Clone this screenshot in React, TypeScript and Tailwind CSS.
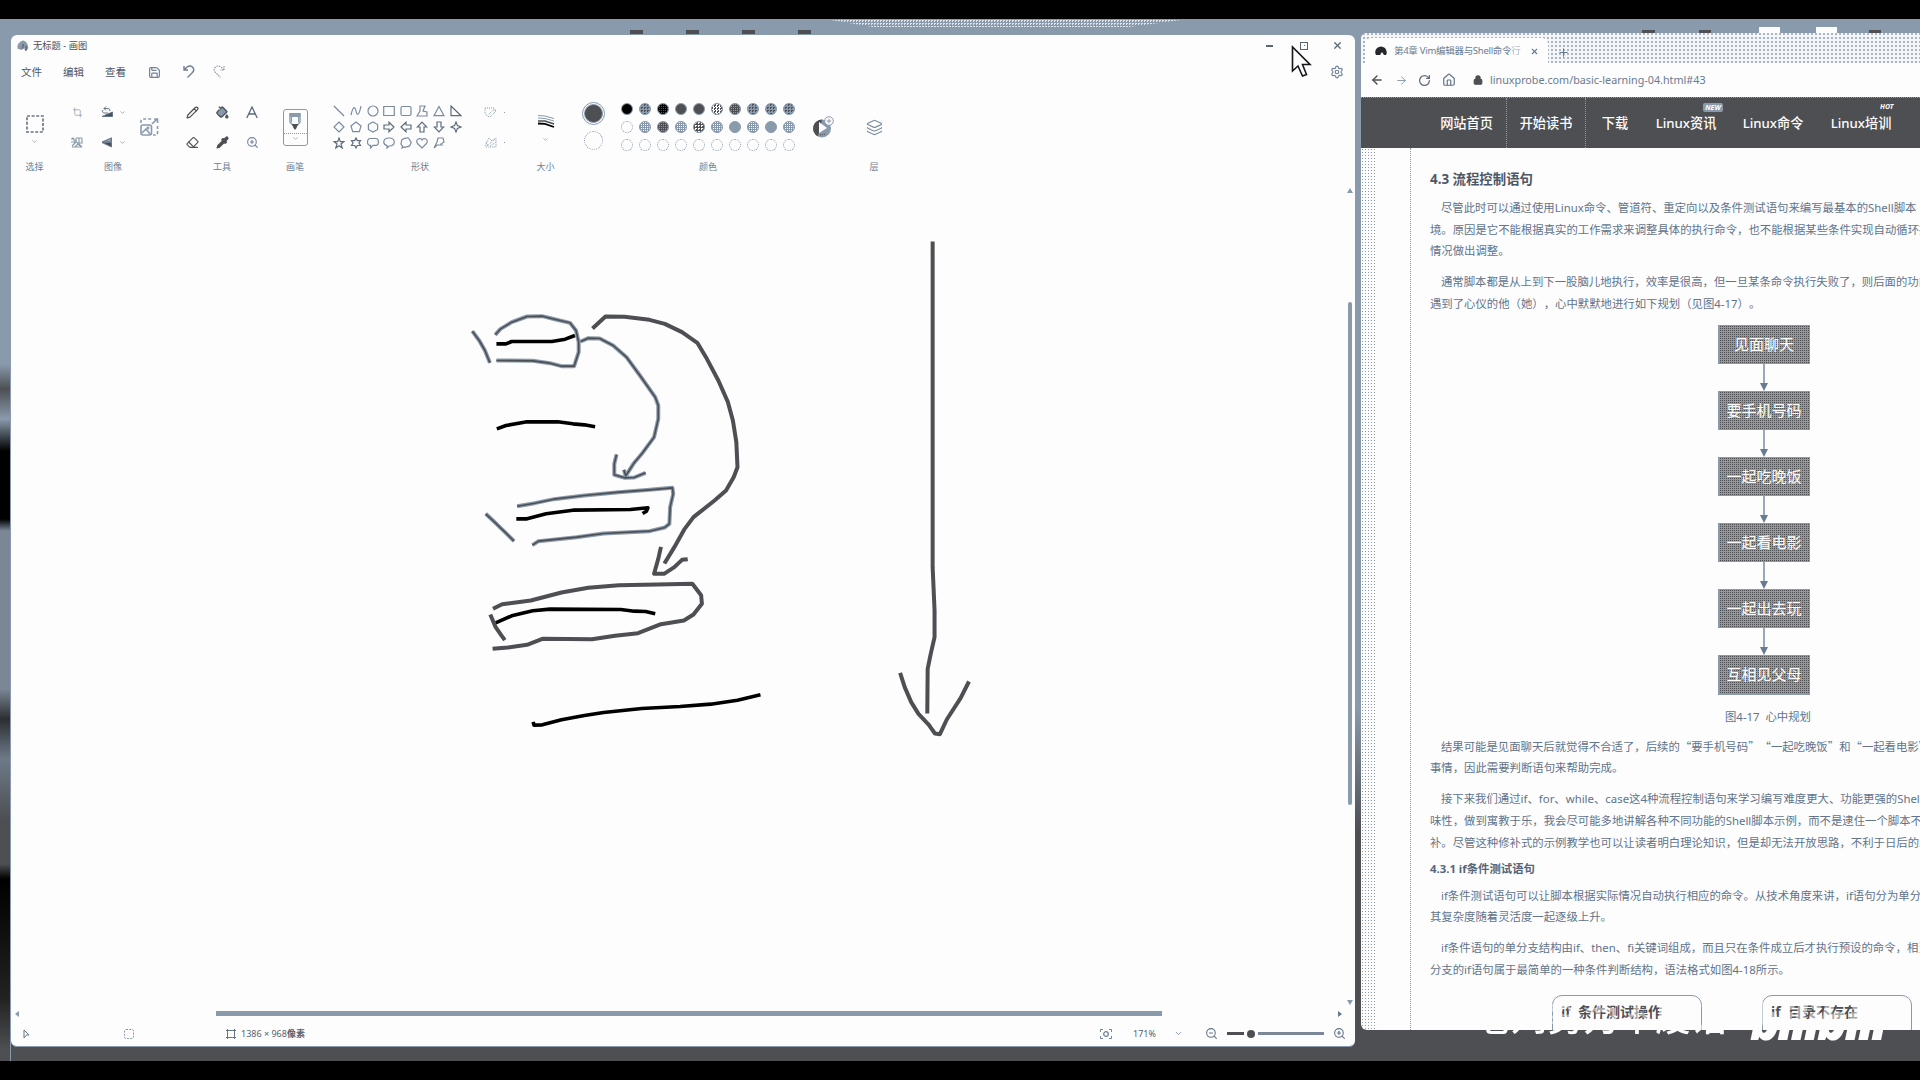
import React from "react";
import {
  Save, Undo2, Redo2, Settings, Crop, Pencil, PaintBucket, Eraser, Pipette, ZoomIn, ZoomOut,
  Layers, ArrowLeft, ArrowRight, RotateCw, House, Lock, X, Plus, ChevronDown,
} from "lucide-react";

const SHAPES = [
  "M1 1L11 11", "M1 10C3 1 5 1 6 6S9 11 11 1", "M6 1A5 5 0 1 1 6 11A5 5 0 1 1 6 1Z", "M.7 1.5H11.3V10.5H.7Z",
  "M2.5 1.5H9.5Q11 1.5 11 3V9Q11 10.5 9.5 10.5H2.5Q1 10.5 1 9V3Q1 1.5 2.5 1.5Z",
  "M4 1H9L7 6L11 7V11H1L4 6Z", "M6 1.5L11 10.7H1Z", "M1 1L11 10.7H1Z",
  "M6 1L11 6L6 11L1 6Z", "M6 1L11 5L9.3 10.7H2.7L1 5Z", "M6 1L10.6 3.5V8.5L6 11L1.4 8.5V3.5Z",
  "M1 4H6V1.2L11 6L6 10.8V8H1Z", "M11 4H6V1.2L1 6L6 10.8V8H11Z", "M4 11V6H1.2L6 1L10.8 6H8V11Z",
  "M4 1V6H1.2L6 11L10.8 6H8V1Z", "M6 1L7.4 4.6L11 6L7.4 7.4L6 11L4.6 7.4L1 6L4.6 4.6Z",
  "M6 1L7.3 4.6H11L8 7L9.2 11L6 8.7L2.8 11L4 7L1 4.6H4.7Z",
  "M6 1L7.3 3.6H10.5L9 6L10.5 8.5H7.3L6 11L4.7 8.5H1.5L3 6L1.5 3.6H4.7Z",
  "M2.5 1.5H9.5Q11.5 2 11.5 5Q11.5 8 9.5 8.3H6L3.5 11V8.3H2.5Q.5 8 .5 5Q.5 2 2.5 1.5Z",
  "M6 1C13 1 13 9 6 9L4 11V8.6C-1 7 0 1 6 1Z",
  "M6 1.2Q9 0 9.5 3Q12 5 10.5 7Q10 10 7 9.6Q5 11 4 10L2 11L2.6 9Q0 7 1.5 5Q1 2 6 1.2Z",
  "M6 11L1.5 6.5C-1 3 4 -.5 6 3C8 -.5 13 3 10.5 6.5Z",
  "M5 1H10L11 5L8 7L9 8L4 8L1 11L4 5Z",
];

const SOLID = "bg-[#8a9aad]";
const DOT_DARK = "bg-[#8a9aad] bg-[conic-gradient(#4d4f53_25%,transparent_0)] bg-[size:3px_3px]";
const DOT_LIGHT = "bg-[#8a9aad] bg-[conic-gradient(#fdfdfd_25%,transparent_0)] bg-[size:2px_2px]";
const GREY = "bg-[#4d4f53]";
const PALETTE = [
  "bg-black", DOT_DARK, "bg-black bg-[conic-gradient(#4d4f53_25%,transparent_0)] bg-[size:2px_2px]", GREY, GREY,
  "bg-[#4d4f53] bg-[conic-gradient(#fdfdfd_25%,transparent_0_50%,#fdfdfd_0_75%,transparent_0)] bg-[size:3px_3px]",
  "bg-[#4d4f53] bg-[conic-gradient(#8a9aad_25%,transparent_0)] bg-[size:2px_2px]", DOT_DARK, DOT_DARK, DOT_DARK,
  "bg-[#fdfdfd] border-dotted", DOT_LIGHT, "bg-[#4d4f53] bg-[conic-gradient(#8a9aad_25%,transparent_0)] bg-[size:2px_2px]", DOT_LIGHT,
  "bg-[#4d4f53] bg-[conic-gradient(#fdfdfd_25%,transparent_0)] bg-[size:3px_3px]",
  DOT_LIGHT, SOLID, DOT_LIGHT, SOLID, DOT_LIGHT,
];

const Chev = ({ s = 7 }: { s?: number }) => <ChevronDown size={s} strokeWidth={2.5} className="shrink-0 text-[#8a9aad]" />;

function Group({ label, className, children }: { label: string; className: string; children: React.ReactNode }) {
  return (
    <div className={`flex shrink-0 flex-col pt-[7px] ${className}`}>
      <div className="flex h-[60px] items-center justify-center">{children}</div>
      <div className="mt-[4px] h-3 text-center text-[9px] leading-3 text-[#6d7e94]">{label}</div>
    </div>
  );
}

const Cell = ({ children }: { children: React.ReactNode }) => (
  <div className="flex h-[30px] items-center justify-center">{children}</div>
);

function Ribbon() {
  return (
    <div className="flex h-[88px] shrink-0">
      <Group label="选择" className="w-[47px]">
        <div className="flex flex-col items-center pt-[6px]">
          <svg width="18" height="18" viewBox="0 0 18 18" fill="none" stroke="#697687" strokeWidth="1.7" strokeDasharray="3 1.6"><path d="M1 1H17V17H1Z" /></svg>
          <div className="h-[5px]" />
          <Chev />
        </div>
      </Group>
      <Group label="图像" className="w-[110px]">
        <div className="flex w-full items-center pl-[11px]">
          <div className="w-4">
            <Cell><Crop size={11} strokeWidth={1.6} strokeDasharray="2 1.5" className="text-[#8a9aad]" /></Cell>
            <Cell>
              <svg width="12" height="11" viewBox="0 0 12 11" fill="none" stroke="#8a9aad" strokeWidth="1.1"><path d="M0 2L3 1M0 5H4M1 9L5 5M4 10L7 7M1 1L11 10M5 1V4M8 1V9M5 1H11M11 1V6H6M1 10H11" /></svg>
            </Cell>
          </div>
          <div className="ml-[14px] w-4">
            <Cell>
              <svg width="13" height="12" viewBox="0 0 13 12" fill="none" stroke="#65758a"><path d="M5 .5L3 2.5L5 4.5M3 2.5H7Q9 2.5 9 5M2 4Q0 7 4 7H7" /><path d="M1 10.5H11.5V6Z" fill="#4d4f53" /></svg>
            </Cell>
            <Cell>
              <svg width="12" height="11" viewBox="0 0 12 11" stroke="#697687"><path d="M10.5 .8V5L1 5Z" fill="#8a9aad" /><path d="M1 5.5H10.5V10Z" fill="#4d4f53" /></svg>
            </Cell>
          </div>
          <div className="ml-[2px] w-[10px]"><Cell><Chev /></Cell><Cell><Chev /></Cell></div>
          <svg className="ml-[13px]" width="19" height="18" viewBox="0 0 19 18" fill="none" stroke="#8a9aad" strokeWidth="1.6">
            <path d="M1 5V3Q1 1 3 1H13" strokeDasharray="3 2" /><path d="M17.5 8V15Q17.5 17 15 17H13" strokeDasharray="3 2" />
            <path d="M12 6L17 1M14 1H17.5V5" /><rect x="1" y="7" width="10.5" height="10" rx="2" /><path d="M2 15L6 11L10 16" /><circle cx="8" cy="10" r=".6" />
          </svg>
        </div>
      </Group>
      <Group label="工具" className="w-[108px]">
        <div className="grid grid-cols-[30px_30px_30px] text-[#4d4f53]">
          <Cell><Pencil size={13} strokeWidth={2.2} /></Cell>
          <Cell><PaintBucket size={13} strokeWidth={2.4} fill="#8a9aad" /></Cell>
          <Cell><svg width="12" height="13" viewBox="0 0 12 13" fill="none" stroke="#5b6878" strokeWidth="1.3"><path d="M.8 12L6 1L11.2 12M2.8 8H9.2" /></svg></Cell>
          <Cell><Eraser size={13} strokeWidth={2} /></Cell>
          <Cell><Pipette size={13} strokeWidth={2.3} fill="#4d4f53" /></Cell>
          <Cell><ZoomIn size={13} strokeWidth={2} className="text-[#72839a]" /></Cell>
        </div>
      </Group>
      <Group label="画笔" className="w-[38px]">
        <div className="flex h-[37px] w-[25px] flex-col items-center rounded-[3px] border border-[#8a9aad]">
          <svg className="mt-[3px]" width="12" height="18" viewBox="0 0 12 18"><path d="M1 .5H11V9L8.5 12H3.5L1 9Z" fill="#fdfdfd" stroke="#8a9aad" strokeWidth="1.4" /><path d="M1 .5H11V3.5H1ZM2.5 4V9M9.5 4V9" fill="#8a9aad" stroke="#8a9aad" /><path d="M3 11H9L7.5 15L6 17L4.5 15Z" fill="#4d4f53" /></svg>
          <div className="mb-[1px] mt-[2px] w-full border-t border-dotted border-[#8a9aad]" />
          <Chev />
        </div>
      </Group>
      <Group label="形状" className="w-[212px]">
        <div className="flex w-full items-center pl-[17px]">
          <div className="grid w-[133px] grid-cols-8">
            {SHAPES.map((d, i) => (
              <div key={i} className="flex h-4 items-center justify-center">
                <svg width="12" height="12" viewBox="0 0 12 12" fill="none" stroke={i === 7 || (i > 10 && i < 18) ? "#5f6c7c" : "#7b8b9f"} strokeWidth="1.2"><path d={d} /></svg>
              </div>
            ))}
          </div>
          <div className="ml-[20px] w-[13px]">
            <Cell><svg width="13" height="11" viewBox="0 0 13 11" fill="none" stroke="#8a9aad" strokeDasharray="1 1"><path d="M1 1H10L12 4L6 10L3 9L1 6ZM12 4L9 3L4 8" /></svg></Cell>
            <Cell><svg width="13" height="11" viewBox="0 0 13 11" fill="none" stroke="#8a9aad" strokeDasharray="1 1"><path d="M1 9L5 1L8 4L12 1V10H1M3 9L11 2M6 9L12 5M2 5L4 9" /></svg></Cell>
          </div>
          <div className="ml-[4px] w-[6px]">
            <Cell><div className="h-px w-px bg-[#8a9aad]" /></Cell>
            <Cell><div className="h-px w-px bg-[#8a9aad]" /></Cell>
          </div>
        </div>
      </Group>
      <Group label="大小" className="w-[39px]">
        <div className="flex flex-col items-center pt-[3px]">
          <svg width="18" height="14" viewBox="0 0 18 14" fill="none"><path d="M1 1.5L8 2L17 4.5M1 4L8 4.5L17 7" stroke="#8a9aad" /><path d="M1 7L8 7L17 10" stroke="#4d4f53" strokeWidth="1.5" /><path d="M1 9.5L8 9.8L17 13" stroke="#000" strokeWidth="1.8" /></svg>
          <div className="h-[8px]" />
          <Chev />
        </div>
      </Group>
      <Group label="颜色" className="w-[286px]">
        <div className="flex w-full items-center pl-[17px]">
          <div className="flex w-[23px] flex-col items-center gap-[6px] pb-[2px]">
            <div className="flex h-[23px] w-[23px] items-center justify-center rounded-full border border-[#8a9aad]">
              <div className="h-[19px] w-[19px] rounded-full border border-[#8a9aad] bg-[#4d4f53]" />
            </div>
            <div className="h-[19px] w-[19px] rounded-full border border-dotted border-[#8a9aad]" />
          </div>
          <div className="ml-[13px] grid grid-cols-[repeat(10,18px)]">
            {PALETTE.map((c, i) => (
              <div key={i} className="flex h-[18px] items-center justify-center">
                <div className={`h-3 w-3 rounded-full border border-[#8a9aad] ${c}`} />
              </div>
            ))}
            {Array.from({ length: 10 }, (_, i) => (
              <div key={i} className="flex h-[18px] items-center justify-center">
                <div className="h-3 w-3 rounded-full border border-dotted border-[#8a9aad]" />
              </div>
            ))}
          </div>
          <svg className="ml-[14px]" width="22" height="22" viewBox="0 0 22 22"><circle cx="10" cy="12.5" r="9" fill="#8a9aad" /><path d="M10 3.5A9 9 0 0 0 6 20.5L8 12Z" fill="#4d4f53" /><path d="M7 6L15 12L7 17Z" fill="#fdfdfd" /><path d="M8 19L14 18" stroke="#4d4f53" strokeDasharray="1 1" /><circle cx="17" cy="5" r="4.3" fill="#fdfdfd" stroke="#8a9aad" /><path d="M17 2.7V7.3M14.7 5H19.3" stroke="#8a9aad" /></svg>
        </div>
      </Group>
      <Group label="层" className="w-[46px]">
        <Layers size={17} strokeWidth={1.6} className="text-[#7d8ea3]" />
      </Group>
    </div>
  );
}

const BLUE = [
  "M57 122L75 150L90 180L103 217",
  "M117 133L130 116L160 95L200 78L240 77L275 87L312 97L328 120L335 155L335 185L323 227L290 227L260 218L215 211L120 210",
  "M340 153L360 143L390 144L425 165L460 200L495 255L535 320L543 345L543 385L532 440L500 490L478 520L458 556L453 538",
  "M434 492L428 520L428 553L455 562L480 561L510 547",
  "M92 670L120 700L145 728L166 752",
  "M174 647L220 638L270 626L350 615L440 605L520 598L580 592L582 610L574 650L572 700L560 711L520 722L400 729L330 740L230 752L214 764",
];
const BLACK = [
  "M120 160L145 160L160 153L265 153L300 146L325 135",
  "M121 415L145 405L200 394L280 394L320 400L350 403L378 409",
  "M172 685L200 685L250 670L320 659L470 657L516 652L512 662L502 669",
  "M118 997L160 976L215 961L260 956L445 957L480 962L510 963L535 970",
  "M216 1294L218 1304L240 1303L290 1288L350 1275L400 1266L500 1254L600 1248L680 1241L750 1229L810 1213",
];
const DARK = [
  "M371 114L405 78L455 79L520 88L560 100L605 125L645 157L670 205L700 270L725 335L738 390L747 455L750 530L740 560L720 600L690 630L635 680L612 715L585 770L559 819",
  "M550 769L543 805L532 850L558 850L585 830L605 808L620 806",
  "M111 955L135 941L210 930L290 906L360 892L440 884L540 882L632 880L655 914L657 940L635 972L610 990L550 1001L490 1028L430 1036L370 1046L240 1045L200 1063L150 1071L110 1075",
  "M104 972L118 1010L132 1033L142 1049",
  "M1260 -147L1260 830L1265 960L1265 1040L1255 1090L1247 1135L1246 1269",
  "M1175 1147L1187 1190L1204 1235L1223 1270L1250 1303L1266 1329L1279 1331L1297 1287L1333 1223L1355 1173",
];

function Strokes({ paths, color, width }: { paths: string[]; color: string; width: number }) {
  return (
    <g stroke={color} strokeWidth={width}>
      {paths.map((d) => <path key={d} d={d} vectorEffect="non-scaling-stroke" />)}
    </g>
  );
}

function Canvas() {
  return (
    <svg className="h-[827px] w-[1330px] shrink-0" viewBox="11 178 1330 827" fill="none">
      <g transform="translate(450.5 290.5) scale(.38265 .33333)" strokeLinejoin="round">
        <Strokes paths={BLUE} color="#8a9aad" width={4} />
        <Strokes paths={BLUE} color="#4d4f53" width={1.6} />
        <Strokes paths={BLACK} color="#000" width={3.6} />
        <Strokes paths={DARK} color="#4d4f53" width={4} />
      </g>
    </svg>
  );
}

function PaintWindow() {
  return (
    <div className="mt-[16px] flex h-[1012px] w-[1344px] shrink-0 flex-col overflow-hidden rounded-[6px] border-b border-[#8a9aad] bg-[#fdfdfd]">
      <div className="flex h-[21px] shrink-0 items-center pl-[6px]">
        <svg width="12" height="12" viewBox="0 0 12 12"><path d="M3 2Q6 -1 9 2Q12 5 11 9L8 11L7 7L5 10L1 9Q-1 5 3 2Z" fill="#8a9aad" /><path d="M6 4V9M9 6V11" stroke="#4d4f53" /></svg>
        <span className="ml-[4px] text-[9.3px] leading-none text-[#4d4f53]">无标题 - 画图</span>
        <div className="ml-auto flex items-center pr-[12px] text-[#5b6675]">
          <div className="h-[2px] w-[7px] bg-current" />
          <div className="ml-[27px] flex h-[8px] w-[8px] items-center justify-center border border-current"><div className="h-px w-px bg-current" /></div>
          <X size={11} strokeWidth={2.6} className="ml-[24px]" />
        </div>
      </div>
      <div className="flex h-[34px] shrink-0 items-center pl-[10px] text-[10.5px] text-[#4d5866]">
        <span className="w-[42px]">文件</span><span className="w-[42px]">编辑</span><span className="w-[43px]">查看</span>
        <Save size={13} strokeWidth={2.2} className="-mt-[2px] text-[#72839a]" />
        <svg className="-mt-[3px] ml-[22px]" width="12" height="13" viewBox="0 0 12 13" fill="none" stroke="#6d7e94" strokeWidth="1.4"><path d="M1 1V5H5M1 5L4 2Q7 0 9.5 2Q12 5 9.5 7.5L4.5 12.5" /></svg>
        <svg className="-mt-[3px] ml-[18px]" width="12" height="13" viewBox="0 0 12 13" fill="none" stroke="#8a9aad" strokeWidth="1.2" strokeDasharray="1.5 1"><path d="M11 1V5H7M11 5L8 2Q5 0 2.5 2Q0 5 2.5 7.5L7.5 12.5" /></svg>
        <Settings size={14} strokeWidth={2} className="-mt-[3px] ml-auto mr-[11px] text-[#72839a]" />
      </div>
      <Ribbon />
      <div className="flex shrink-0">
        <Canvas />
        <div className="flex w-[14px] flex-col items-center pl-[4px] pt-[10px]">
          <div className="h-0 w-0 border-x-[3px] border-b-[5px] border-x-transparent border-b-[#8a9aad]" />
          <div className="mt-[109px] h-[503px] w-[4px] rounded-full bg-[#8a9aad]" />
          <div className="mt-auto h-0 w-0 border-x-[3px] border-t-[5px] border-x-transparent border-t-[#8a9aad]" />
        </div>
      </div>
      <div className="flex h-[17px] shrink-0 items-center pl-[4px]">
        <div className="h-0 w-0 border-y-[3px] border-r-[4px] border-y-transparent border-r-[#8a9aad]" />
        <div className="ml-[197px] h-[5px] w-[946px] bg-[#8a9aad] bg-[conic-gradient(#4d4f53_25%,transparent_0)] bg-[size:4px_1px] bg-[position:0_2px] bg-repeat-x" />
        <div className="ml-auto mr-[13px] h-0 w-0 border-y-[3px] border-l-[4px] border-y-transparent border-l-[#697687]" />
      </div>
      <div className="flex h-[23px] shrink-0 items-center pl-[12px] text-[9px] text-[#56616f]">
        <svg width="7" height="10" viewBox="0 0 7 10" fill="#fdfdfd" stroke="#65758a"><path d="M1 1L6 6H3.5L1 9Z" /></svg>
        <svg className="ml-[94px]" width="10" height="10" viewBox="0 0 10 10" fill="none" stroke="#8a9aad" strokeDasharray="2 1.2"><rect x=".5" y=".5" width="9" height="9" rx="1.5" /></svg>
        <svg className="ml-[92px]" width="10" height="10" viewBox="0 0 10 10" fill="none" stroke="#65758a"><path d="M1.5 0V10M8.5 0V10M0 1.5H10M0 8.5H10" /></svg>
        <span className="ml-[5px] whitespace-nowrap">1386 × 968<b>像素</b></span>
        <svg className="ml-auto" width="12" height="10" viewBox="0 0 12 10" fill="none" stroke="#72839a"><path d="M.5 3V.5H3M9 .5H11.5V3M11.5 7V9.5H9M3 9.5H.5V7" /><circle cx="6" cy="5" r="2.3" strokeWidth="1.3" /></svg>
        <span className="ml-[21px] w-[20px] whitespace-nowrap">171%</span>
        <span className="ml-[21px]"><Chev s={9} /></span>
        <ZoomOut size={13} strokeWidth={2} className="ml-[22px] text-[#65758a]" />
        <div className="ml-[9px] h-[3px] w-[17px] bg-[#4d4f53]" />
        <div className="mx-[3px] h-[8px] w-[8px] rounded-full bg-[#4d4f53]" />
        <div className="h-[3px] w-[66px] bg-[#7b8797]" />
        <ZoomIn size={13} strokeWidth={2} className="ml-[9px] mr-[9px] text-[#65758a]" />
      </div>
    </div>
  );
}

function Line({ t, indent }: { t: string; indent?: boolean }) {
  return (
    <div className={indent ? "pl-[11px]" : ""}>
      {t.split(/([“”])/).map((p, i) => (i % 2 ? <span key={i} className="font-['Noto_Sans_CJK_SC']">{p}</span> : p))}
    </div>
  );
}
const Para = ({ lines, className = "mb-[9px]" }: { lines: string[]; className?: string }) => (
  <div className={`whitespace-nowrap ${className}`}>{lines.map((t, i) => <Line key={i} t={t} indent={i === 0} />)}</div>
);

const STEPS = ["见面聊天", "要手机号码", "一起吃晚饭", "一起看电影", "一起出去玩", "互相见父母"];

function NavItem({ children, className, tag }: { children: string; className: string; tag?: React.ReactNode }) {
  return (
    <div className={`relative flex h-full shrink-0 items-center justify-center whitespace-nowrap pt-[2px] ${className}`}>
      {children}
      {tag}
    </div>
  );
}

function BrowserWindow() {
  return (
    <div className="ml-[6px] mt-[14px] flex h-[997px] w-[559px] shrink-0 flex-col overflow-hidden rounded-l-[6px] bg-[#fdfdfd]">
      <div className="flex h-[30px] shrink-0 bg-[#f4f6f8] bg-[conic-gradient(#a9b5c4_25%,transparent_0)] bg-[size:4px_4px]">
        <div className="ml-[4px] mt-[5px] flex w-[183px] items-center rounded-t-[6px] bg-[#fdfdfd] pl-[10px] pt-[2px]">
          <svg width="12" height="11" viewBox="0 0 12 11"><path d="M1 9Q-1 5 2 2Q6 -1 10 2Q13 6 11 9H9L7 6L5 9Z" fill="#26282b" /></svg>
          <span className="ml-[7px] w-[128px] whitespace-nowrap text-[9.5px] tracking-[-0.28px] text-[#697b92]">第4章 Vim编辑器与Shell命令<span className="opacity-50">行</span></span>
          <X size={9} strokeWidth={3} className="ml-[8px] text-[#697b92]" />
        </div>
        <Plus size={13} strokeWidth={2} className="ml-[9px] mt-[13px] text-[#697b92]" />
      </div>
      <div className="flex h-[34px] shrink-0 items-center pl-[9px]">
        <ArrowLeft size={14} strokeWidth={2.4} className="text-[#4d4f53]" />
        <ArrowRight size={13} strokeWidth={1.8} className="ml-[11px] text-[#8a9aad]" />
        <RotateCw size={13} strokeWidth={2.3} className="ml-[10px] text-[#5f6c7c]" />
        <House size={14} strokeWidth={2.1} className="ml-[11px] text-[#65758a]" />
        <Lock size={10} strokeWidth={3} fill="#4d4f53" className="ml-[17px] text-[#4d4f53]" />
        <span className="ml-[7px] whitespace-nowrap text-[10.75px] text-[#697a90]">linuxprobe.com/basic-learning-04.html#43</span>
      </div>
      <div className="flex h-[51px] shrink-0 border-t border-dotted border-[#8a9aad] bg-[#4d4f53] pl-[66px] text-[13.2px] font-medium text-[#fdfdfd]">
        <NavItem className="w-[80px] border-r border-dotted border-[#8a9aad]">网站首页</NavItem>
        <NavItem className="w-[79px] border-r border-dotted border-[#8a9aad]">开始读书</NavItem>
        <NavItem className="w-[58px]">下载</NavItem>
        <NavItem className="w-[84px]" tag={<span className="absolute left-[59px] top-[5px] h-[9px] w-[20px] rounded-[2px] bg-[#8a9aad] text-center text-[7px] font-bold italic leading-[9px]">NEW</span>}>Linux资讯</NavItem>
        <NavItem className="w-[90px]">Linux命令</NavItem>
        <NavItem className="w-[86px]" tag={<span className="absolute left-[62px] top-[4px] text-[7px] font-bold italic leading-[9px]">HOT</span>}>Linux培训</NavItem>
        <NavItem className="w-[60px] !justify-start pl-[16px]">红</NavItem>
      </div>
      <div className="flex min-h-0 flex-1">
        <div className="w-[50px] shrink-0 border-r border-dotted border-[#8a9aad]">
          <div className="h-full w-[14px] bg-[radial-gradient(#8a9aad_0.6px,transparent_0.8px)] bg-[size:3px_3px]" />
        </div>
        <div className="w-[509px] overflow-hidden pl-[19px] pt-[21px] text-[11.38px] leading-[21.7px] text-[#62738a] [text-spacing-trim:space-all]">
          <h2 className="mb-[8px] text-[13.4px] font-bold leading-[20px] text-[#4d5866]">4.3 流程控制语句</h2>
          <Para lines={["尽管此时可以通过使用Linux命令、管道符、重定向以及条件测试语句来编写最基本的Shell脚本", "境。原因是它不能根据真实的工作需求来调整具体的执行命令，也不能根据某些条件实现自动循环执", "情况做出调整。"]} />
          <Para lines={["通常脚本都是从上到下一股脑儿地执行，效率是很高，但一旦某条命令执行失败了，则后面的功能", "遇到了心仪的他（她），心中默默地进行如下规划（见图4-17）。"]} className="mb-[10.5px]" />
          <div className="ml-[288px] flex w-[92px] flex-col items-center">
            {STEPS.map((s, i) => (
              <React.Fragment key={s}>
                {i > 0 && (
                  <div className="flex h-[27px] flex-col items-center">
                    <div className="w-[1.5px] flex-1 bg-[#9aa8b9]" />
                    <div className="h-0 w-0 border-x-[4px] border-t-[8px] border-x-transparent border-t-[#697b92]" />
                  </div>
                )}
                <div className="flex h-[39.1px] w-[92px] items-center justify-center border border-[#8a9aad] bg-[#8a9aad] bg-[conic-gradient(#4d4f53_25%,transparent_0)] bg-[size:2px_2px] text-[15px] text-[#fdfdfd]">{s}</div>
              </React.Fragment>
            ))}
          </div>
          <div className="mb-[8.5px] mt-[11px] whitespace-pre pl-[295px]">图4-17  心中规划</div>
          <Para lines={["结果可能是见面聊天后就觉得不合适了，后续的“要手机号码”“一起吃晚饭”和“一起看电影”", "事情，因此需要判断语句来帮助完成。"]} />
          <Para lines={["接下来我们通过if、for、while、case这4种流程控制语句来学习编写难度更大、功能更强的Shell", "味性，做到寓教于乐，我会尽可能多地讲解各种不同功能的Shell脚本示例，而不是逮住一个脚本不", "补。尽管这种修补式的示例教学也可以让读者明白理论知识，但是却无法开放思路，不利于日后的工"]} className="mb-[4.5px]" />
          <h3 className="mb-[5px] font-bold text-[#56657a]">4.3.1 if条件测试语句</h3>
          <Para lines={["if条件测试语句可以让脚本根据实际情况自动执行相应的命令。从技术角度来讲，if语句分为单分支", "其复杂度随着灵活度一起逐级上升。"]} />
          <Para lines={["if条件语句的单分支结构由if、then、fi关键词组成，而且只在条件成立后才执行预设的命令，相当", "分支的if语句属于最简单的一种条件判断结构，语法格式如图4-18所示。"]} className="mb-[14.5px]" />
          <div className="ml-[122px] flex gap-[60px] whitespace-pre text-[14px] font-bold leading-[32px] text-[#4d4f53]">
            <div className="h-[60px] w-[150px] shrink-0 rounded-[10px] border border-[#8a9aad] pl-[8px]">if  条件测试操作</div>
            <div className="h-[60px] w-[150px] shrink-0 rounded-[10px] border border-[#8a9aad] pl-[8px]">if  目录不存在</div>
          </div>
        </div>
      </div>
    </div>
  );
}

export default function App() {
  return (
    <div className="relative h-[1080px] w-[1920px] overflow-hidden bg-black pt-[19px] font-['Noto_Sans','Noto_Sans_CJK_SC',sans-serif]">
      <div className="flex h-[1042px] bg-[linear-gradient(#8a9aad_0_66%,#4d4f53_78%)]">
        <div className="w-[11px] shrink-0 border-r border-[#8a9aad] bg-[linear-gradient(#8a9aad_0_345px,#4d4f53_370px,#8a9aad_400px,#000_432px,#000_500px,#7b8797_512px,#7b8797_670px,#2c2e31_700px,#6e7a89_740px,#4d4f53_800px,#4d4f53_845px,#000_860px,#222_980px,#4d4f53_1030px)]" />
        <PaintWindow />
        <BrowserWindow />
      </div>
      <div className="absolute left-[831px] top-[20px] h-[7px] w-[350px] bg-[conic-gradient(#dfe4ea_25%,transparent_0)] bg-[size:3px_3px] [clip-path:polygon(0_0,100%_0,85%_100%,12%_100%)]" />
      <div className="absolute left-[630px] top-[30px] flex gap-[43px]">
        {[0, 1, 2, 3].map((i) => <div key={i} className="h-[4px] w-[13px] bg-[#4d4f53]" />)}
      </div>
      <div className="absolute left-[1642px] top-[27px] flex h-[6px] items-end">
        <div className="h-[3px] w-[13px] bg-[#4d4f53]" />
        <div className="ml-[44px] h-[3px] w-[12px] bg-[#4d4f53]" />
        <div className="ml-[48px] h-[6px] w-[21px] bg-[#fdfdfd]" />
        <div className="ml-[36px] h-[6px] w-[21px] bg-[#fdfdfd]" />
        <div className="ml-[32px] h-[3px] w-[12px] bg-[#4d4f53]" />
      </div>
      <svg className="absolute left-[1291px] top-[45px]" width="21" height="33" viewBox="0 0 21 33"><path d="M1.5 2V26L7 21L11.5 31L15.5 29.5L11.5 19.5H19Z" fill="#fdfdfd" stroke="#15171a" strokeWidth="1.6" /></svg>
      <div className="absolute left-[1475px] top-[990px] flex h-[60px] items-start whitespace-nowrap text-[#fdfdfd] [mask-image:linear-gradient(rgba(0,0,0,.5)_40px,#000_40px)]">
        <div className="w-[275px] pt-[8px] text-[36px] font-medium leading-[40px]">老刘努力不废话</div>
        <div className="pt-[3px] text-[50px] font-black italic leading-[56px] tracking-[-3px]">bilibili</div>
      </div>
    </div>
  );
}
